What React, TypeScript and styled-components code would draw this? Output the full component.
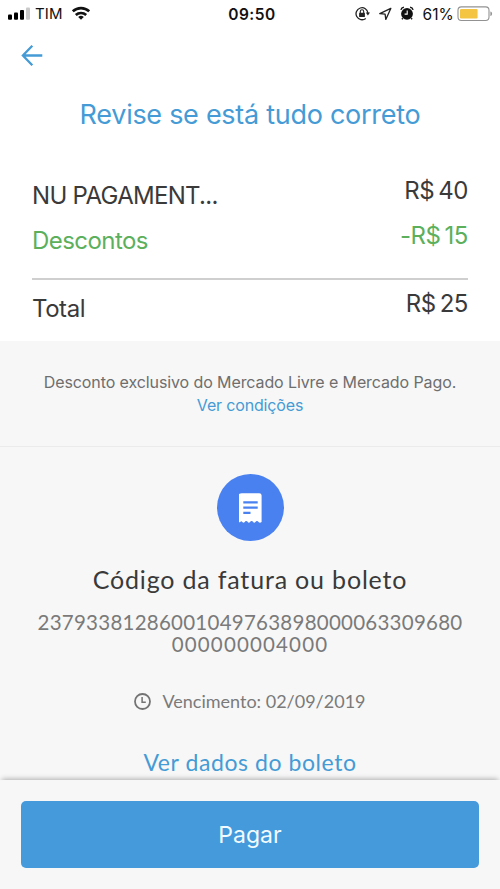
import React from "react";
import styled, { createGlobalStyle } from "styled-components";

const sans = `Inter, "Liberation Sans", sans-serif`;
const brand = `Lato, "Open Sans", sans-serif`;
const blue = "#459bd5";

const GlobalStyle = createGlobalStyle`
  * { box-sizing: border-box; }
  body { margin: 0; background: #fff; font-family: ${sans}; }
  svg { display: block; flex: none; }
`;

const Screen = styled.main`
  display: flex;
  flex-direction: column;
  height: 889px;
  overflow: hidden;
  background: #f7f7f7;
`;

const StatusBar = styled.header`
  display: grid;
  grid-template-columns: 1fr auto 1fr;
  align-items: center;
  height: 28px;
  padding: 0 7px 0 8px;
  background: #fff;
  color: #111;
  font-size: 15px;
  line-height: 28px;
  white-space: nowrap;
`;

const StatusGroup = styled.div<{ $end?: boolean }>`
  display: flex;
  align-items: center;
  justify-content: ${(p) => (p.$end ? "flex-end" : "flex-start")};
`;

const Carrier = styled.span`
  margin: 0 9px 0 5px;
  letter-spacing: 0.1px;
`;

const Clock = styled.time`
  margin-left: 3px;
  padding-top: 1px;
  font-weight: 600;
  font-size: 15.5px;
  line-height: 27px;
  letter-spacing: 0.5px;
`;

const BatteryLevel = styled.span`
  margin: 0 3px 0 8px;
  padding-top: 1px;
  font-size: 15.5px;
  line-height: 27px;
  letter-spacing: 0.15px;
`;

const Gap = styled.span<{ $w: number }>`
  width: ${(p) => p.$w}px;
`;

const NavBar = styled.nav`
  display: flex;
  align-items: center;
  height: 55px;
  padding-left: 21px;
  background: #fff;
`;

const BackButton = styled.button`
  padding: 0;
  border: 0;
  background: none;
  color: ${blue};
`;

const Summary = styled.section`
  flex: none;
  height: 258px;
  padding: 15px 32px 0;
  background: #fff;
`;

const Title = styled.h1`
  margin: 0 0 44px;
  color: ${blue};
  font-size: 27px;
  font-weight: 400;
  line-height: 34px;
  letter-spacing: -0.28px;
  text-align: center;
  white-space: nowrap;
`;

const Line = styled.div<{ $tone?: string }>`
  display: flex;
  justify-content: space-between;
  height: 45px;
  color: ${(p) => p.$tone ?? "#3a3a3a"};
  font-size: 24px;
  line-height: 30px;
`;

const Label = styled.span<{ $tracking: number }>`
  padding-top: 5px;
  letter-spacing: ${(p) => p.$tracking}px;
`;

const Amount = styled.span`
  display: flex;
  gap: 4px;
  letter-spacing: -0.45px;
`;

const Rule = styled.hr`
  height: 1.5px;
  margin: 12px 0 9px;
  border: 0;
  background: #cfcfcf;
`;

const Note = styled.section`
  flex: none;
  height: 106px;
  padding-top: 30px;
  border-bottom: 1px solid #ebebeb;
  color: #6e6e6e;
  font-size: 16px;
  line-height: 23px;
  letter-spacing: -0.1px;
  text-align: center;
`;

const NoteLink = styled.a`
  display: block;
  color: ${blue};
  letter-spacing: -0.16px;
`;

const Bill = styled.section`
  display: flex;
  flex: 1;
  flex-direction: column;
  align-items: center;
  min-height: 0;
  padding-top: 27px;
  color: #7a7a7a;
  font-family: ${brand};
  white-space: nowrap;
`;

const BillBadge = styled.div`
  display: grid;
  place-items: center;
  flex: none;
  width: 67px;
  height: 67px;
  border-radius: 50%;
  background: #4981f0;
`;

const BillTitle = styled.h2`
  margin: 23px 0 17px;
  color: #3a3a3a;
  font-size: 25px;
  font-weight: 400;
  line-height: 30px;
  letter-spacing: 0.82px;
`;

const CodeLine = styled.div<{ $tracking: number }>`
  font-size: 20.5px;
  line-height: 22px;
  letter-spacing: ${(p) => p.$tracking}px;
`;

const DueDate = styled.div`
  display: flex;
  align-items: center;
  gap: 11px;
  margin: 34px 0 35px;
  font-size: 18px;
  line-height: 24px;
`;

const BillLink = styled.a`
  color: ${blue};
  font-size: 23px;
  line-height: 28px;
  letter-spacing: 0.57px;
`;

const Footer = styled.footer`
  position: relative;
  flex: none;
  height: 109.5px;
  padding: 21.5px 21px;
  background: #f7f7f7;
  box-shadow: 0 -3px 5px -2px rgba(0, 0, 0, 0.3);
`;

const PayButton = styled.button`
  display: block;
  width: 100%;
  height: 66.5px;
  padding: 2px 0 0;
  border: 0;
  border-radius: 5px;
  background: #459adc;
  color: #f2fbff;
  font: 400 23px/64px ${sans};
`;

const SignalIcon = () => (
  <svg width="22" height="28" viewBox="8 0 22 28">
    <rect x="8" y="14.5" width="4" height="5.2" rx="1" />
    <rect x="14" y="12.4" width="4" height="7.3" rx="1" />
    <rect x="20" y="10" width="4" height="9.7" rx="1" />
    <rect x="26" y="7.4" width="4" height="12.3" rx="1" fill="#c9c9c9" />
  </svg>
);

const WifiIcon = () => (
  <svg width="18" height="28" viewBox="72 0 18 28" fill="none" stroke="#111" strokeWidth="2.6">
    <path d="M72.8 11.4a11.8 11.8 0 0 1 16.4 0" />
    <path d="M75.8 15a7.6 7.6 0 0 1 10.4 0" />
    <path d="M81 19.8 78.2 17a4.1 4.1 0 0 1 5.6 0z" fill="#111" stroke="none" />
  </svg>
);

const RotationLockIcon = () => (
  <svg width="15" height="28" viewBox="0 0 15 28" fill="none" stroke="#222" strokeWidth="1.3">
    <path d="M10.8 18.4A6 6 0 1 1 13 13" />
    <path d="M10.8 12.5h4.2l-2.1 3z" fill="#222" stroke="none" />
    <rect x="4.1" y="12.8" width="5.8" height="4.2" rx=".5" fill="#222" stroke="none" />
    <path d="M5.3 13v-1.5a1.7 1.7 0 0 1 3.4 0V13" strokeWidth="1.1" />
  </svg>
);

const LocationIcon = () => (
  <svg width="13" height="28" viewBox="0 0 13 28" fill="none" stroke="#222" strokeWidth="1.3" strokeLinejoin="round">
    <path d="M11.8 8.4.8 13.6l5.3.5.7 5.3z" />
  </svg>
);

const AlarmIcon = () => (
  <svg width="14" height="28" viewBox="0 0 14 28">
    <circle cx="7" cy="13.8" r="5.9" fill="#111" />
    <path
      d="M.9 9.8A3.4 3.4 0 0 1 3.9 7.2M13.1 9.8a3.4 3.4 0 0 0-3-2.6M2.8 18.2l-.9 1M11.2 18.2l.9 1"
      fill="none"
      stroke="#111"
      strokeWidth="1.4"
    />
    <path d="M7.2 10.6v3.5H4.6" fill="none" stroke="#fff" strokeWidth="1.1" />
  </svg>
);

const BatteryIcon = () => (
  <svg width="36" height="28" viewBox="457 0 36 28">
    <rect x="458" y="6.9" width="31" height="13.6" rx="3.4" fill="#fff" stroke="#929292" strokeWidth="1.1" />
    <rect x="460" y="8.9" width="17.6" height="9.6" rx="1.2" fill="#f4c443" />
    <path d="M490.4 11.4c2.2.5 2.2 4.1 0 4.6z" fill="#929292" />
  </svg>
);

const BackIcon = () => (
  <svg width="22" height="22" viewBox="0 0 22 22" fill="none" stroke="currentColor" strokeWidth="2.3">
    <path d="M21.3 10.5H2M11.3.8 1.9 10.5l9.4 9.7" />
  </svg>
);

const ReceiptIcon = () => (
  <svg width="23" height="30" viewBox="0 0 23 30">
    <path
      d="M2.8.2h17.4q2.4 0 2.4 2.4V29q-1.8 1.5-3.1 0a1.6 1.6 0 0 0-3 0q-1.3 1.5-2.4 0a1.6 1.6 0 0 0-3 0q-1.3 1.5-2.4 0a1.6 1.6 0 0 0-3 0q-1.3 1.5-2.3 0a1.4 1.4 0 0 0-2.2 0q-1.4.8-2.8-.6V2.6Q.4.2 2.8.2z"
      fill="#fff"
    />
    <path d="M4.3 9.4h14.4M4.3 14.6h14.4M4.3 19.8h7.2" stroke="#4981f0" strokeWidth="2.3" />
  </svg>
);

const DueIcon = () => (
  <svg width="17" height="17" viewBox="0 0 17 17" fill="none" stroke="#737373" strokeWidth="1.8">
    <circle cx="8.5" cy="8.5" r="7.5" />
    <path d="M8.1 4v5.2h3.7" strokeWidth="1.5" />
  </svg>
);

interface SummaryLineProps {
  label: string;
  currency: string;
  value: string;
  tone?: string;
  tracking: number;
}

const SummaryLine = ({ label, currency, value, tone, tracking }: SummaryLineProps) => (
  <Line $tone={tone}>
    <Label $tracking={tracking}>{label}</Label>
    <Amount>
      <span>{currency}</span>
      <span>{value}</span>
    </Amount>
  </Line>
);

export default function App() {
  return (
    <Screen>
      <GlobalStyle />
      <StatusBar>
        <StatusGroup>
          <SignalIcon />
          <Carrier>TIM</Carrier>
          <WifiIcon />
        </StatusGroup>
        <Clock>09:50</Clock>
        <StatusGroup $end>
          <RotationLockIcon />
          <Gap $w={9} />
          <LocationIcon />
          <Gap $w={8} />
          <AlarmIcon />
          <BatteryLevel>61%</BatteryLevel>
          <BatteryIcon />
        </StatusGroup>
      </StatusBar>
      <NavBar>
        <BackButton aria-label="Voltar">
          <BackIcon />
        </BackButton>
      </NavBar>
      <Summary>
        <Title>Revise se está tudo correto</Title>
        <SummaryLine label="NU PAGAMENT..." currency="R$" value="40" tracking={-0.7} />
        <SummaryLine label="Descontos" currency="-R$" value="15" tone="#5cb05c" tracking={-0.55} />
        <Rule />
        <SummaryLine label="Total" currency="R$" value="25" tracking={-0.45} />
      </Summary>
      <Note>
        Desconto exclusivo do Mercado Livre e Mercado Pago.
        <NoteLink>Ver condições</NoteLink>
      </Note>
      <Bill>
        <BillBadge>
          <ReceiptIcon />
        </BillBadge>
        <BillTitle>Código da fatura ou boleto</BillTitle>
        <CodeLine $tracking={0.25}>23793381286001049763898000063309680</CodeLine>
        <CodeLine $tracking={1.15}>000000004000</CodeLine>
        <DueDate>
          <DueIcon />
          Vencimento: 02/09/2019
        </DueDate>
        <BillLink>Ver dados do boleto</BillLink>
      </Bill>
      <Footer>
        <PayButton>Pagar</PayButton>
      </Footer>
    </Screen>
  );
}
